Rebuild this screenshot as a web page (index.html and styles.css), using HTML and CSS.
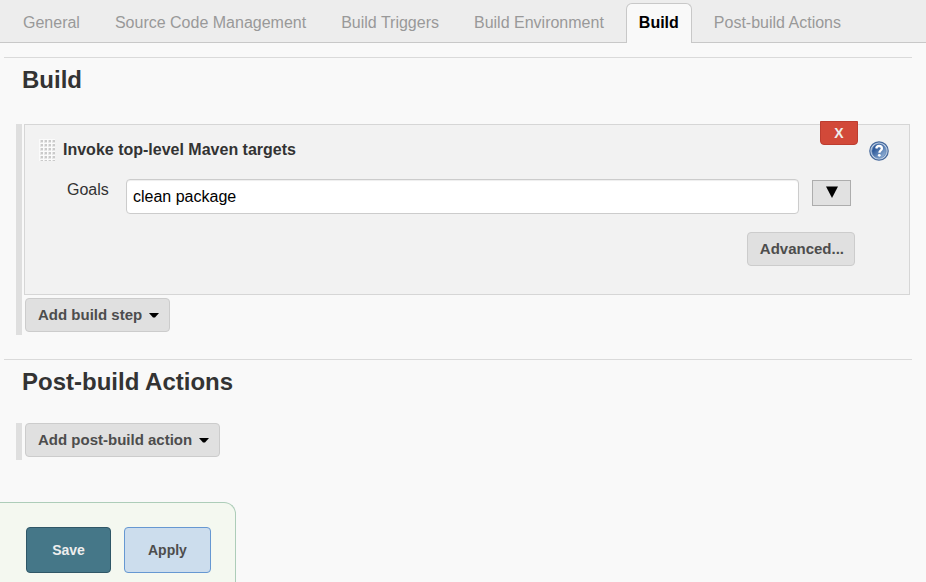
FILE: index.html
```
<!DOCTYPE html>
<html lang="en">
<head>
<meta charset="utf-8">
<meta name="viewport" content="width=device-width, initial-scale=1">
<title>Job configuration</title>
<link rel="stylesheet" href="styles.css">
</head>
<body>
<nav class="tabs">
  <a class="tab" href="#general">General</a>
  <a class="tab" href="#scm">Source Code Management</a>
  <a class="tab" href="#triggers">Build Triggers</a>
  <a class="tab" href="#environment">Build Environment</a>
  <a class="tab tab-active" href="#build">Build</a>
  <a class="tab" href="#post-build">Post-build Actions</a>
</nav>
<form class="config">
  <section class="section" id="build">
    <h2 class="section-title">Build</h2>
    <div class="steps steps-filled">
      <div class="step">
        <div class="step-main">
          <button class="delete" type="button">X</button>
          <div class="step-head">
            <svg class="handle" width="16" height="22" viewBox="0 0 16 22" aria-hidden="true">
              <defs>
                <pattern id="grip" width="4" height="4" patternUnits="userSpaceOnUse">
                  <rect width="4" height="4" fill="#fbfbfb"/>
                  <rect x="1" y="1" width="3" height="3" fill="#e6e6e6"/>
                  <rect x="2" y="1" width="2" height="2" fill="#cacaca"/>
                </pattern>
              </defs>
              <rect width="16" height="22" fill="url(#grip)"/>
            </svg>
            <h3 class="step-title">Invoke top-level Maven targets</h3>
          </div>
          <div class="field">
            <label class="label" for="goals">Goals</label>
            <input class="input" id="goals" type="text" value="clean package">
            <button class="expand" type="button" aria-label="Expand">
              <svg width="12" height="14" viewBox="0 0 12 14"><path d="M0 0.500H12L6 12Z" fill="#000"/></svg>
            </button>
          </div>
          <div class="step-foot"><button class="btn" type="button">Advanced...</button></div>
        </div>
        <button class="help" type="button" aria-label="Help">
          <svg width="20" height="20" viewBox="0 0 20 20">
            <defs><linearGradient id="blue" x1="0" y1="0" x2="1" y2="1">
              <stop offset="0.300" stop-color="#315c9c"/><stop offset="1" stop-color="#a5c2e2"/>
            </linearGradient></defs>
            <circle cx="10" cy="10" r="9.200" fill="#c3d3e8" stroke="#46699c" stroke-width="1.200"/>
            <circle cx="10" cy="10" r="7.200" fill="url(#blue)" stroke="#5c7fb0" stroke-width="0.700"/>
            <path d="M7.300 7.500C7.500 5.700 8.700 5 10.100 5c1.700 0 2.800 1 2.800 2.400 0 2-2.500 2.200-2.500 4.300" fill="none" stroke="#fff" stroke-width="2.300"/>
            <circle cx="10.300" cy="14.300" r="1.400" fill="#fff"/>
          </svg>
        </button>
      </div>
      <button class="btn" type="button">Add build step
        <svg class="caret" width="10" height="5" viewBox="0 0 10 5"><path d="M0 0H10L6 4.500H4Z" fill="#000"/></svg>
      </button>
    </div>
  </section>
  <section class="section" id="post-build">
    <h2 class="section-title">Post-build Actions</h2>
    <div class="steps">
      <button class="btn" type="button">Add post-build action
        <svg class="caret" width="10" height="5" viewBox="0 0 10 5"><path d="M0 0H10L6 4.500H4Z" fill="#000"/></svg>
      </button>
    </div>
  </section>
  <div class="actions">
    <button class="action save" type="submit">Save</button>
    <button class="action apply" type="button">Apply</button>
  </div>
</form>
</body>
</html>
```
FILE: styles.css
```
* {
  box-sizing: border-box;
}

body {
  margin: 0;
  background: #f9f9f9;
  color: #333;
  font: 16px/20px "Liberation Sans", Arial, sans-serif;
}

button,
input {
  font: inherit;
}

button {
  cursor: pointer;
}

svg {
  display: block;
}

.tabs {
  display: flex;
  align-items: flex-end;
  gap: 9px;
  padding: 3px 10px 0;
  background: #ededed;
  box-shadow: inset 0 -1px #c8c8c8;
}

.tab {
  padding: 9px 12px 10px;
  border: 1px solid transparent;
  border-bottom: 0;
  border-radius: 6px 6px 0 0;
  color: #999;
  text-decoration: none;
  white-space: nowrap;
}

.tab-active {
  border-color: #c8c8c8;
  background: #f9f9f9;
  color: #000;
  font-weight: bold;
}

.config {
  padding: 14px 14px 0 4px;
}

.section {
  border-top: 1px solid #dadada;
  padding: 7px 0 24px;
}

.section-title {
  margin: 0 0 26px;
  padding-left: 18px;
  font-size: 24px;
  line-height: 30px;
}

.steps {
  margin: 0 2px 0 12px;
  padding: 0 0 3px 2px;
  border-left: 6px solid #dfdfdf;
}

.steps-filled {
  margin-top: 29px;
}

.step {
  display: flex;
  gap: 11px;
  margin-bottom: 3px;
  padding: 0 20px 28px 14px;
  border: 1px solid #d6d6d6;
  background: #f2f2f2;
}

.step-main {
  position: relative;
  flex: 1;
  padding-top: 14px;
}

.step-head {
  display: flex;
  align-items: center;
  gap: 8px;
  margin-bottom: 18px;
}

.step-title {
  margin: 0;
  font-size: 16px;
}

.delete {
  position: absolute;
  top: -4px;
  right: 0;
  width: 38px;
  padding: 1px 0;
  border: 1px solid #bd3d30;
  border-radius: 0 0 4px 4px;
  background: #d24939;
  color: #eee;
  font-size: 14px;
  font-weight: bold;
}

.field {
  display: flex;
  align-items: flex-start;
  padding: 0 7px 0 28px;
}

.label {
  width: 59px;
  line-height: 22px;
}

.input {
  flex: 1;
  min-width: 0;
  height: 35px;
  padding: 0 6px;
  border: 1px solid #ccc;
  border-radius: 4px;
  background: #fff;
  box-shadow: inset 0 1px 1px #eee;
  color: #000;
}

.expand {
  display: grid;
  place-items: center;
  width: 39px;
  height: 26px;
  margin: 1px 0 0 13px;
  padding: 0;
  border: 1px solid #adadad;
  background: #e1e1e1;
}

.step-foot {
  display: flex;
  justify-content: flex-end;
  margin-top: 18px;
  padding-right: 3px;
}

.btn {
  display: flex;
  align-items: center;
  gap: 7px;
  height: 34px;
  margin-left: 1px;
  padding: 0 10px 0 12px;
  border: 1px solid #ccc;
  border-radius: 4px;
  background: #e0e0e0;
  color: #4d4d4d;
  font-size: 15px;
  font-weight: bold;
}

.help {
  align-self: flex-start;
  margin-top: 16px;
  padding: 0;
  border: 0;
  background: none;
}

.actions {
  position: fixed;
  bottom: 0;
  left: 0;
  display: flex;
  gap: 13px;
  padding: 24px 24px 9px 26px;
  border: 1px solid #adcdb9;
  border-width: 1px 1px 0 0;
  border-radius: 0 12px 0 0;
  background: #f4f8f0;
}

.action {
  min-width: 85px;
  height: 46px;
  padding: 0 23px;
  border: 1px solid;
  border-radius: 4px;
  font-size: 14px;
  font-weight: bold;
}

.save {
  border-color: #2f5767;
  background: #457788;
  color: #eee;
}

.apply {
  border-color: #6698d2;
  background: #ccdded;
  color: #4d4d4d;
}
```
